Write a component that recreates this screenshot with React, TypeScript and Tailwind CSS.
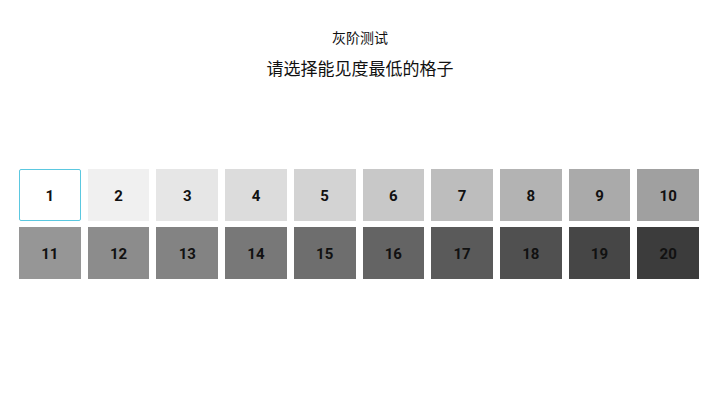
import React from "react";

const shades = [
  "#ffffff", "#f0f0f0", "#e6e6e6", "#dcdcdc", "#d3d3d3",
  "#c8c8c8", "#bdbdbd", "#b3b3b3", "#aaaaaa", "#a0a0a0",
  "#969696", "#8c8c8c", "#838383", "#787878", "#6e6e6e",
  "#646464", "#5a5a5a", "#505050", "#464646", "#3c3c3c",
];

export default function App() {
  return (
    <div
      className="w-[720px] h-[405px] bg-white flex flex-col items-center"
      style={{ fontFamily: 'Roboto, "Noto Sans CJK SC", sans-serif' }}
    >
      <div className="mt-[28px] text-[14px] leading-[21px] text-[#111]">灰阶测试</div>
      <div className="mt-[8px] text-[17px] leading-[25px] font-normal text-[#111]">
        请选择能见度最低的格子
      </div>
      <div className="mt-[87px] w-full pl-[19px] pr-[21px] grid grid-cols-10 gap-x-[7px] gap-y-[6px]">
        {shades.map((c, i) => (
          <div
            key={i}
            className={
              i === 0
                ? "h-[52px] flex items-center justify-center pt-[2px] text-[15px] font-bold text-[#111] border border-[#5bc8e0] rounded-[2px]"
                : "h-[52px] flex items-center justify-center pt-[2px] text-[15px] font-bold text-[#111]"
            }
            style={{ backgroundColor: c }}
          >
            {i + 1}
          </div>
        ))}
      </div>
    </div>
  );
}
